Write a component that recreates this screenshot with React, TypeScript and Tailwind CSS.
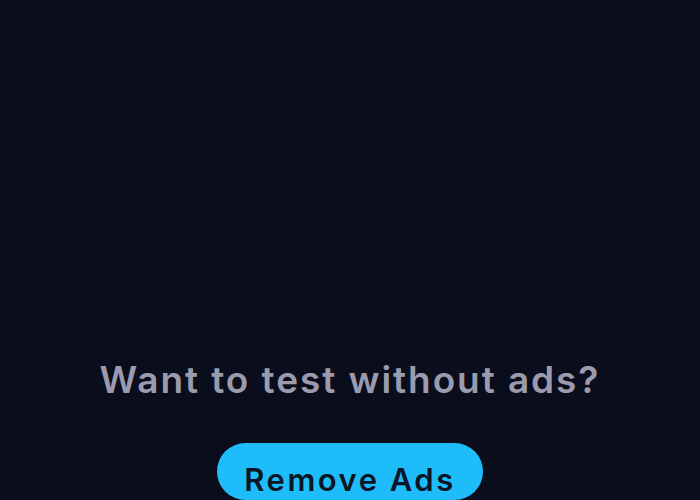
import React from "react";

const App: React.FC = () => {
  return (
    <div
      className="h-[500px] w-full overflow-hidden bg-[#0a0d1b] flex flex-col items-center pt-[358px]"
      style={{ fontFamily: "Inter, 'Noto Sans', sans-serif" }}
    >
      {/* Prompt */}
      <p className="text-[37px] leading-[44px] font-semibold text-[#9b9bae] tracking-[0.052em]">
        Want to test without ads?
      </p>

      {/* Remove ads button */}
      <button
        type="button"
        className="mt-[41px] w-[266px] h-[90px] rounded-full bg-[#1fbcfa] text-[#0b1526] text-[31px] font-semibold tracking-[0.08em] pt-[17px] flex justify-center items-start"
      >
        <span className="leading-[40px]">Remove Ads</span>
      </button>
    </div>
  );
};

export default App;
